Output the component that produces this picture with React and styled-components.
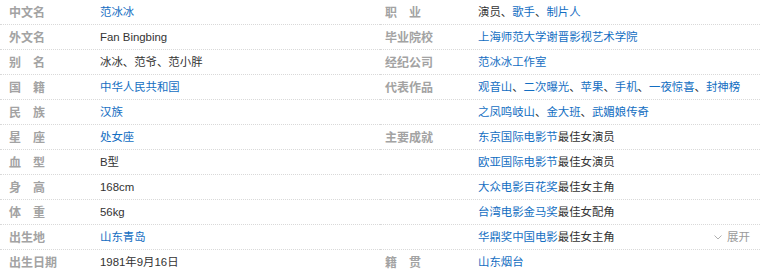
import React from "react";
import styled, { createGlobalStyle } from "styled-components";

const Global = createGlobalStyle`
  html, body { margin: 0; padding: 0; background: #fff; }
  body { font-family: "Liberation Sans", Arial, "Noto Sans CJK SC", sans-serif; }
`;

const Panel = styled.div`
  display: grid;
  grid-template-columns: 380px 380px;
  width: 760px;
`;

const Column = styled.dl`
  margin: 0;
  display: flex;
  flex-direction: column;
`;

const Row = styled.div`
  display: grid;
  grid-template-columns: ${(p) => p.$labelWidth}px 1fr;
  padding-left: ${(p) => p.$pad}px;
  height: 24px;
  border-bottom: 1px dotted #d9d9d9;
  align-items: center;
`;

const Label = styled.dt`
  margin: 0;
  font-family: "Noto Sans CJK SC", sans-serif;
  font-size: 12px;
  font-weight: 700;
  color: #a3a3a3;
  line-height: 24px;
  white-space: pre;
`;

const Value = styled.dd`
  margin: 0;
  display: flex;
  align-items: center;
  justify-content: space-between;
  font-size: 11.4px;
  line-height: 24px;
  color: #333;
  white-space: nowrap;
`;

const Text = styled.span`
  font-family: "Liberation Sans", Arial, "Noto Sans CJK SC", sans-serif;
`;

const Link = styled.a`
  color: #136ec2;
  text-decoration: none;
`;

const Toggle = styled.span`
  display: flex;
  align-items: center;
  gap: 5px;
  margin-right: 10px;
  color: #9a9a9a;
  font-size: 11.5px;
`;

const L = (t) => ({ link: t });

const leftItems = [
  { label: "中文名", lines: [[L("范冰冰")]] },
  { label: "外文名", lines: [["Fan Bingbing"]] },
  { label: "别　名", lines: [["冰冰、范爷、范小胖"]] },
  { label: "国　籍", lines: [[L("中华人民共和国")]] },
  { label: "民　族", lines: [[L("汉族")]] },
  { label: "星　座", lines: [[L("处女座")]] },
  { label: "血　型", lines: [["B型"]] },
  { label: "身　高", lines: [["168cm"]] },
  { label: "体　重", lines: [["56kg"]] },
  { label: "出生地", lines: [[L("山东青岛")]] },
  { label: "出生日期", lines: [["1981年9月16日"]] },
];

const rightItems = [
  { label: "职　业", lines: [["演员、", L("歌手"), "、", L("制片人")]] },
  { label: "毕业院校", lines: [[L("上海师范大学谢晋影视艺术学院")]] },
  { label: "经纪公司", lines: [[L("范冰冰工作室")]] },
  {
    label: "代表作品",
    lines: [
      [L("观音山"), "、", L("二次曝光"), "、", L("苹果"), "、", L("手机"), "、", L("一夜惊喜"), "、", L("封神榜")],
      [L("之凤鸣岐山"), "、", L("金大班"), "、", L("武媚娘传奇")],
    ],
  },
  {
    label: "主要成就",
    lines: [
      [L("东京国际电影节"), "最佳女演员"],
      [L("欧亚国际电影节"), "最佳女演员"],
      [L("大众电影百花奖"), "最佳女主角"],
      [L("台湾电影金马奖"), "最佳女配角"],
      [L("华鼎奖中国电影"), "最佳女主角"],
    ],
    toggleOn: 4,
  },
  { label: "籍　贯", lines: [[L("山东烟台")]] },
];

const Chevron = () => (
  <svg width="8" height="5" viewBox="0 0 8 5" fill="none">
    <polyline points="0.5,0.5 4,4 7.5,0.5" stroke="#b0b0b0" strokeWidth="1" />
  </svg>
);

const renderParts = (parts) =>
  parts.map((p, i) =>
    typeof p === "string" ? (
      <Text key={i}>{p}</Text>
    ) : (
      <Link key={i} href="#">{p.link}</Link>
    )
  );

const InfoColumn = ({ items, pad, labelWidth }) => (
  <Column>
    {items.flatMap((item) =>
      item.lines.map((line, i) => (
        <Row key={item.label + i} $pad={pad} $labelWidth={labelWidth}>
          <Label>{i === 0 ? item.label : ""}</Label>
          <Value>
            <span>{renderParts(line)}</span>
            {item.toggleOn === i && (
              <Toggle>
                <Chevron />
                展开
              </Toggle>
            )}
          </Value>
        </Row>
      ))
    )}
  </Column>
);

export default function App() {
  return (
    <>
      <Global />
      <Panel>
        <InfoColumn items={leftItems} pad={9} labelWidth={91} />
        <InfoColumn items={rightItems} pad={5} labelWidth={93} />
      </Panel>
    </>
  );
}
